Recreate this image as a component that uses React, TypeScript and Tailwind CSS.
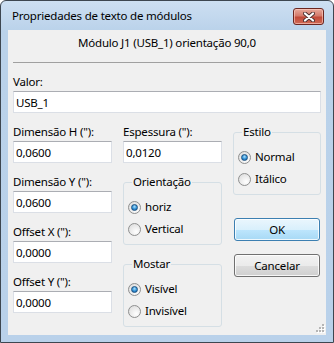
import React from 'react'

const inputCls =
  'h-[22px] w-full bg-white border border-[#dbdfe6] border-t-[#abadb3] px-[2px] text-[11.5px] leading-[20px] text-black outline-none tracking-[-0.2px]'

function Field({ label, value }: { label: string; value: string }) {
  return (
    <div className="flex flex-col">
      <span className="h-[16px] leading-[16px]">{label}</span>
      <input className={'mt-[1px] ' + inputCls} defaultValue={value} readOnly />
    </div>
  )
}

function Radio({ label, checked }: { label: string; checked?: boolean }) {
  return (
    <div className="flex h-[22px] items-center gap-[4px]">
      <span className="flex h-[13px] w-[13px] items-center justify-center rounded-full border border-[#8e8f8f] bg-[radial-gradient(circle_at_65%_70%,#ffffff,#d8d8d8)]">
        {checked && (
          <span className="h-[7px] w-[7px] rounded-full border border-[#1c5180] bg-[radial-gradient(circle_at_50%_35%,#aee0fb,#2d8fd4_55%,#1b5ca4)]" />
        )}
      </span>
      <span className="leading-[16px]">{label}</span>
    </div>
  )
}

function Group({ title, children }: { title: string; children: React.ReactNode }) {
  return (
    <fieldset className="rounded-[3px] border border-[#d5dfe5] pl-[4px] pr-[4px] pt-[6px] pb-[4px]">
      <legend className="ml-[4px] px-[1px] leading-[16px]">{title}</legend>
      {children}
    </fieldset>
  )
}

function WinButton({ label, primary }: { label: string; primary?: boolean }) {
  return (
    <button
      className={
        'mx-[1px] h-[23px] rounded-[3px] border text-center leading-[20px] text-black shadow-[inset_0_0_0_1px_rgba(255,255,255,0.8)] ' +
        (primary
          ? 'border-[#3c7fb1] bg-[linear-gradient(to_bottom,#eaf6fd_0%,#d9f0fc_50%,#bee6fd_50%,#a7d9f5_100%)]'
          : 'border-[#707070] bg-[linear-gradient(to_bottom,#f2f2f2_0%,#ebebeb_50%,#dddddd_50%,#cfcfcf_100%)]')
      }
    >
      {label}
    </button>
  )
}

export default function App() {
  return (
    <div className="h-[343px] w-[334px] font-['Noto_Sans',sans-serif] text-[11.5px] tracking-[-0.2px] text-black">
      <div className="flex h-full w-full flex-col rounded-t-[6px] border border-[#3d4650] bg-[linear-gradient(to_bottom,#cddff2,#bad2ea_30px,#b9d1ea)] px-[7px] pb-[7px]">
        {/* title bar */}
        <div className="-mx-[7px] flex h-[29px] items-center justify-between pl-[11px] pr-[9px]">
          <span className="pt-[1px] leading-[16px]">Propriedades de texto de módulos</span>
          <div className="mt-[2px] flex h-[17px] w-[31px] items-center justify-center rounded-[3px] border border-[#6b2620] bg-[linear-gradient(to_bottom,#e8a99b_0%,#d47a6b_45%,#c24a39_55%,#cf6a55_100%)] shadow-[inset_0_0_0_1px_rgba(255,210,200,0.6)]">
            <svg width="12" height="10" viewBox="0 0 12 10">
              <path d="M2 1.5 L10 8.5 M10 1.5 L2 8.5" stroke="#4a3030" strokeWidth="4" strokeLinecap="round" />
              <path d="M2 1.5 L10 8.5 M10 1.5 L2 8.5" stroke="#ffffff" strokeWidth="2.2" strokeLinecap="round" />
            </svg>
          </div>
        </div>

        {/* client area */}
        <div className="relative flex flex-1 flex-col bg-[#f0f0f0] px-[5px]">
          <div className="mt-[5px] text-center leading-[16px]">Módulo J1 (USB_1) orientação 90,0</div>
          <div className="mt-[11px] border-t border-[#a0a0a0]" />

          <div className="mt-[11px]">
            <Field label="Valor:" value="USB_1" />
          </div>

          <div className="mt-[11px] grid grid-cols-[99px_99px_88px] gap-x-[11px]">
            <div className="flex flex-col gap-[11px]">
              <Field label={'Dimensão H ("):'} value="0,0600" />
              <Field label={'Dimensão Y ("):'} value="0,0600" />
              <Field label={'Offset X ("):'} value="0,0000" />
              <Field label={'Offset Y ("):'} value="0,0000" />
            </div>
            <div className="flex flex-col gap-[11px]">
              <Field label={'Espessura ("):'} value="0,0120" />
              <Group title="Orientação">
                <Radio label="horiz" checked />
                <Radio label="Vertical" />
              </Group>
              <Group title="Mostar">
                <Radio label="Visível" checked />
                <Radio label="Invisível" />
              </Group>
            </div>
            <div className="flex flex-col">
              <Group title="Estilo">
                <Radio label="Normal" checked />
                <Radio label="Itálico" />
              </Group>
              <div className="mt-[23px] flex flex-col gap-[13px]">
                <WinButton label="OK" primary />
                <WinButton label="Cancelar" />
              </div>
            </div>
          </div>

          {/* resize grip */}
          <svg className="absolute bottom-[2px] right-[1px]" width="10" height="10" viewBox="0 0 10 10">
            {[
              [7, 1],
              [4, 4],
              [7, 4],
              [1, 7],
              [4, 7],
              [7, 7],
            ].map(([x, y]) => (
              <g key={x + '-' + y}>
                <rect x={x + 1} y={y + 1} width="2" height="2" fill="#ffffff" />
                <rect x={x} y={y} width="2" height="2" fill="#b5b5b5" />
              </g>
            ))}
          </svg>
        </div>
      </div>
    </div>
  )
}
